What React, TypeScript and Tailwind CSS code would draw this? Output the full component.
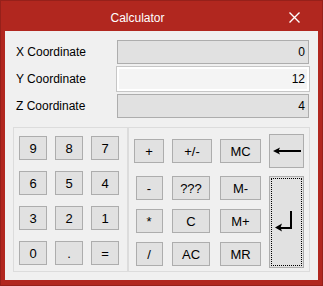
const btn =
  "h-[24px] flex items-center justify-center bg-[#e1e1e1] border border-[#adadad] text-[13px] leading-none text-black"

function Field({ value, focused }: { value: string; focused?: boolean }) {
  if (focused) {
    return (
      <div className="w-[192px] h-[24px] flex items-center justify-end pr-[2px] bg-[#f4f4f4] border-2 border-white outline outline-1 outline-[#c6c6c6] text-[12px] text-black">
        {value}
      </div>
    )
  }
  return (
    <div className="w-[192px] h-[24px] flex items-center justify-end pr-[3px] bg-[#e1e1e1] border border-[#adadad] text-[12px] text-black">
      {value}
    </div>
  )
}

function Row({ label, value, focused }: { label: string; value: string; focused?: boolean }) {
  return (
    <div className="flex items-center pl-[11px] pr-[9px]">
      <span className="flex-1 text-[12px] text-black">{label}</span>
      <Field value={value} focused={focused} />
    </div>
  )
}

export default function App() {
  return (
    <div className="w-[323px] h-[286px] flex flex-col bg-[#b1271f] border border-[#96201a] font-['Liberation_Sans',Arial,sans-serif] select-none">
      {/* title bar */}
      <div className="h-[30px] flex items-center pt-[3px] pl-[4px] pr-[4px]">
        <div className="flex-1 text-center text-white text-[12px]">Calculator</div>
        <div className="w-[48px] flex items-center justify-center">
          <svg width="11" height="11" viewBox="0 0 11 11">
            <path d="M0.5 0.5L10.5 10.5M10.5 0.5L0.5 10.5" stroke="white" strokeWidth="1.4" />
          </svg>
        </div>
      </div>

      {/* client */}
      <div className="flex-1 mx-[4px] mb-[5px] bg-[#f0f0f0] flex flex-col pt-[9px]">
        <div className="flex flex-col gap-[3px]">
          <Row label="X Coordinate" value="0" />
          <Row label="Y Coordinate" value="12" focused />
          <Row label="Z Coordinate" value="4" />
        </div>

        <div className="flex mt-[9px] ml-[8px]">
          {/* number pad */}
          <div className="w-[115px] h-[145px] border border-[#dcdcdc] pl-[5px] pt-[8px]">
            <div className="grid grid-cols-[28px_28px_28px] gap-x-[8px] gap-y-[11px]">
              {["9", "8", "7", "6", "5", "4", "3", "2", "1", "0", ".", "="].map((k) => (
                <div key={k} className={btn}>
                  {k}
                </div>
              ))}
            </div>
          </div>

          {/* operators */}
          <div className="w-[182px] h-[145px] border border-[#dcdcdc] pl-[5px] flex items-start">
            <div className="w-[30px] mt-[11px] flex flex-col items-center">
              <div className={`${btn} w-[30px]`}>+</div>
              <div className={`${btn} w-[27px] mt-[13px]`}>-</div>
              <div className={`${btn} w-[27px] mt-[9px]`}>*</div>
              <div className={`${btn} w-[27px] mt-[9px]`}>/</div>
            </div>
            <div className="w-[40px] ml-[8px] mt-[11px] flex flex-col items-start">
              <div className={`${btn} w-[40px]`}>+/-</div>
              <div className={`${btn} w-[38px] mt-[13px]`}>???</div>
              <div className={`${btn} w-[38px] mt-[9px]`}>C</div>
              <div className={`${btn} w-[38px] mt-[9px]`}>AC</div>
            </div>
            <div className="w-[41px] ml-[8px] mt-[11px] flex flex-col">
              <div className={`${btn} w-[41px]`}>MC</div>
              <div className={`${btn} w-[41px] mt-[13px]`}>M-</div>
              <div className={`${btn} w-[41px] mt-[9px]`}>M+</div>
              <div className={`${btn} w-[41px] mt-[9px]`}>MR</div>
            </div>
            <div className="w-[35px] ml-[8px] mt-[6px] flex flex-col">
              <div className="h-[34px] flex items-center justify-center bg-[#e1e1e1] border border-[#adadad]">
                <svg width="28" height="10" viewBox="0 0 28 10">
                  <path d="M5 5H28" stroke="black" strokeWidth="2" />
                  <path d="M0 5L7 1.5L5.5 5L7 8.5Z" fill="black" />
                </svg>
              </div>
              <div className="relative mt-[8px] h-[92px] flex items-center justify-center bg-[#e1e1e1] border border-[#adadad]">
                <div className="absolute inset-[1px] border border-dotted border-black" />
                <svg width="20" height="22" viewBox="0 0 20 22" className="mr-[3px]">
                  <path d="M16 0V17H5" stroke="black" strokeWidth="2" fill="none" />
                  <path d="M0 16.5L7 12.5L5.5 16.5L7 20.5Z" fill="black" />
                </svg>
              </div>
            </div>
          </div>
        </div>
      </div>
    </div>
  )
}
